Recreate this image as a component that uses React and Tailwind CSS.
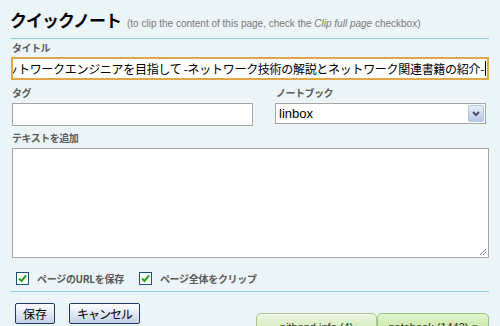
import React from "react";

const jp = "font-['Noto_Sans_CJK_JP','Noto_Sans_CJK_SC',sans-serif]";

function Label({ children, className = "" }) {
  return (
    <div className={`text-[10px] leading-[14px] font-bold text-[#5a5a5a] tracking-[-0.5px] ${className}`}>
      {children}
    </div>
  );
}

function Check({ label }) {
  return (
    <label className="flex items-center gap-[8px]">
      <span className="w-[13px] h-[13px] border border-[#1c4f7c] bg-white flex items-center justify-center">
        <svg width="9" height="9" viewBox="0 0 9 9">
          <path d="M1 4.5 L3.5 7 L8 1.5" stroke="#22a022" strokeWidth="2" fill="none" />
        </svg>
      </span>
      <span className="text-[10px] font-bold text-[#5a5a5a] tracking-[-0.3px]">{label}</span>
    </label>
  );
}

function Btn({ children, className = "" }) {
  return (
    <button className={`h-[21px] px-[7px] border border-[#1f3a66] rounded-[2px] bg-gradient-to-b from-white to-[#c5d2e8] text-[12px] leading-[18px] text-black ${className}`}>
      {children}
    </button>
  );
}

export default function App() {
  return (
    <div className={`w-[500px] h-[326px] overflow-hidden bg-[#ebf4f6] pl-[10px] pr-[11px] ${jp}`}>
      {/* header */}
      <div className="flex items-baseline gap-[6px] pt-[9px] pb-[7px] border-b border-[#8ccfdc]">
        <span className="text-[17px] leading-[22px] font-bold text-black tracking-[-1px]">クイックノート</span>
        <span className="font-['Liberation_Sans',sans-serif] text-[10px] text-[#7a7a7a]">
          (to clip the content of this page, check the <i>Clip full page</i> checkbox)
        </span>
      </div>

      {/* title */}
      <Label className="mt-[2px] ml-[2px]">タイトル</Label>
      <div className="mt-[2px] ml-[1px] h-[23px] border-2 border-[#e0a648] bg-white flex justify-end items-center overflow-hidden whitespace-nowrap pr-[1px]">
        <span className="text-[12px] leading-[18px] text-black tracking-[-0.3px]">
          ネットワークエンジニアを目指して -ネットワーク技術の解説とネットワーク関連書籍の紹介-
        </span>
        <span className="w-px h-[15px] bg-black ml-[1px] shrink-0" />
      </div>

      {/* tag / notebook */}
      <div className="flex mt-[6px] ml-[2px]">
        <div className="w-[241px]">
          <Label>タグ</Label>
          <div className="mt-[3px] h-[23px] border border-[#a5a5a5] bg-white" />
        </div>
        <div className="ml-[22px] w-[211px]">
          <Label className="ml-[1px]">ノートブック</Label>
          <div className="mt-[3px] h-[21px] border border-[#a5a5a5] bg-white flex items-center">
            <span className="flex-1 pl-[3px] font-['Liberation_Sans',sans-serif] text-[13px] text-black">linbox</span>
            <span className="w-[16px] h-[17px] mr-[1px] border border-[#b3c5de] rounded-[2px] bg-gradient-to-b from-[#e6eef9] to-[#b8cae6] flex items-center justify-center">
              <svg width="8" height="6" viewBox="0 0 8 6">
                <path d="M1 1 L4 4 L7 1" stroke="#4a5566" strokeWidth="2" fill="none" />
              </svg>
            </span>
          </div>
        </div>
      </div>

      {/* text */}
      <Label className="mt-[5px] ml-[2px]">テキストを追加</Label>
      <div className="relative mt-[3px] ml-[2px] h-[110px] border border-[#a5a5a5] bg-white">
        <svg className="absolute right-[1px] bottom-[1px]" width="8" height="8" viewBox="0 0 8 8">
          <path d="M7 1 L1 7 M7 4 L4 7" stroke="#888" strokeWidth="1" />
        </svg>
      </div>

      {/* checkboxes */}
      <div className="flex items-center gap-[15px] mt-[13px] ml-[6px] pb-[5px]">
        <Check label="ページのURLを保存" />
        <Check label="ページ全体をクリップ" />
      </div>
      <div className="border-b border-[#8ccfdc]" />

      {/* bottom */}
      <div className="flex justify-between mt-[11px]">
        <div className="flex gap-[14px] ml-[5px]">
          <Btn>保存</Btn>
          <Btn className="tracking-[-1px]">キャンセル</Btn>
        </div>
        <div className="flex mt-[10px]">
          <div className="w-[121px] h-[24px] border border-[#a9c98f] rounded-t-[5px] bg-gradient-to-b from-[#eef7e4] to-[#c9e5a6] text-center text-[11px] leading-[14px] pt-[6px] text-[#333] font-['Liberation_Sans',sans-serif]">
            nithend.info (4)
          </div>
          <div className="w-[112px] h-[24px] border border-[#98bf7c] rounded-t-[5px] bg-gradient-to-b from-[#e4f4d0] to-[#b8e08c] text-center text-[11px] leading-[14px] pt-[6px] text-[#333] font-['Liberation_Sans',sans-serif]">
            notebook (1442) ▾
          </div>
        </div>
      </div>
    </div>
  );
}
